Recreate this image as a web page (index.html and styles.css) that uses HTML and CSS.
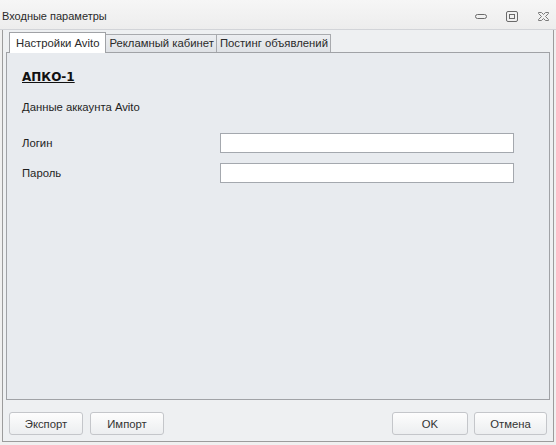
FILE: index.html
```html
<!DOCTYPE html>
<html lang="ru">
<head>
  <meta charset="UTF-8">
  <title>Входные параметры</title>
  <link rel="stylesheet" href="styles.css">
</head>
<body>
  <div class="window">
    <div class="titlebar">
      <span class="title">Входные параметры</span>
      <div class="controls">
        <svg width="12" height="8" viewBox="0 0 12 8"><rect x="0.5" y="2.5" width="11" height="4" rx="2" fill="none" stroke="#6a6a6a"/></svg>
        <svg width="12" height="11" viewBox="0 0 12 11"><rect x="0.5" y="0.5" width="11" height="10" rx="1.5" fill="none" stroke="#6a6a6a"/><rect x="3.5" y="3.5" width="5" height="4" fill="none" stroke="#6a6a6a"/></svg>
        <svg width="13" height="11" viewBox="0 0 13 11"><path d="M1.5 1.5 L4.5 1.5 L6.5 3.5 L8.5 1.5 L11.5 1.5 L11.5 2.5 L8.5 5.5 L11.5 8.5 L11.5 9.5 L8.5 9.5 L6.5 7.5 L4.5 9.5 L1.5 9.5 L1.5 8.5 L4.5 5.5 L1.5 2.5 Z" fill="none" stroke="#7a7a7a"/></svg>
      </div>
    </div>

    <div class="frame">
      <div class="tabs">
        <div class="tab active">Настройки Avito</div>
        <div class="tab">Рекламный кабинет</div>
        <div class="tab">Постинг объявлений</div>
      </div>

      <div class="panel">
        <h1 class="account">АПКО-1</h1>
        <p class="caption">Данные аккаунта Avito</p>
        <div class="field">
          <label for="login">Логин</label>
          <input type="text" id="login">
        </div>
        <div class="field">
          <label for="password">Пароль</label>
          <input type="text" id="password">
        </div>
      </div>

      <div class="footer">
        <div class="group">
          <button>Экспорт</button>
          <button>Импорт</button>
        </div>
        <div class="group right">
          <button class="ok">OK</button>
          <button class="cancel">Отмена</button>
        </div>
      </div>
    </div>
  </div>
</body>
</html>
```

FILE: styles.css
```css
body {
  margin: 0;
  padding: 0;
  font-family: "Liberation Sans", Arial, sans-serif;
  font-size: 11.3px;
  color: #1e1e1e;
  background-color: #f0f0f0;
}
.window {
  width: 556px;
  height: 445px;
  display: flex;
  flex-direction: column;
  background-color: #f0f0f0;
}
.titlebar {
  height: 29px;
  border-bottom: 1px solid #d2d4d8;
  display: flex;
  align-items: center;
  justify-content: space-between;
  background: linear-gradient(#f6f6f6, #ededed);
}
.title {
  padding-left: 2px;
  padding-top: 2px;
  font-size: 11px;
  color: #2a2a2a;
}
.controls {
  display: flex;
  align-items: center;
  gap: 19px;
  padding-right: 6px;
  padding-top: 3px;
}
.frame {
  flex: 1;
  margin: 0 2px 3px 2px;
  border-left: 1px solid #9c9c9c;
  border-right: 1px solid #9c9c9c;
  border-bottom: 1px solid #9c9c9c;
  padding: 1px 3px 0 3px;
  display: flex;
  flex-direction: column;
  background-color: #eef0f2;
}
.tabs {
  display: flex;
  align-items: flex-end;
  padding-left: 3px;
  height: 21px;
}
.tab {
  height: 17px;
  line-height: 17px;
  padding: 0 2px 0 3px;
  border: 1px solid #a8aaae;
  border-bottom: none;
  margin-right: -1px;
  background: linear-gradient(#eceef1, #dfe2e6);
  color: #2a2a2a;
}
.tab.active {
  height: 20px;
  line-height: 20px;
  padding: 0 6px;
  background-color: #fff;
  background-image: none;
  position: relative;
  z-index: 1;
  margin-bottom: -1px;
  border-color: #a0a2a6;
}
.panel {
  height: 348px;
  border: 1px solid #a0a2a6;
  background-color: #e8ebef;
  padding: 0 15px;
  box-sizing: border-box;
}
.account {
  margin: 16px 0 0 0;
  font-family: "DejaVu Sans", Verdana, sans-serif;
  font-size: 12px;
  font-weight: bold;
  text-decoration: underline;
  line-height: 16px;
  color: #111;
}
.caption {
  margin: 14px 0 18px 0;
  line-height: 16px;
}
.field {
  display: flex;
  align-items: center;
  height: 20px;
  margin-bottom: 10px;
}
.field label {
  width: 198px;
}
input[type="text"] {
  width: 294px;
  height: 20px;
  box-sizing: border-box;
  border: 1px solid #a4a8ae;
  background-color: #fff;
  margin: 0;
  padding: 0 3px;
}
.footer {
  display: flex;
  justify-content: space-between;
  padding: 12px 3px 0 3px;
}
.group {
  display: flex;
  gap: 7px;
}
.group.right {
  gap: 6px;
}
button {
  width: 74px;
  height: 23px;
  font-family: "Liberation Sans", Arial, sans-serif;
  font-size: 11.3px;
  color: #333;
  border: 1px solid #c4c6ca;
  border-radius: 3px;
  background: linear-gradient(#fdfdfd, #eceef0);
  padding: 0;
}
.ok {
  width: 76px;
}
.cancel {
  width: 73px;
}
```
